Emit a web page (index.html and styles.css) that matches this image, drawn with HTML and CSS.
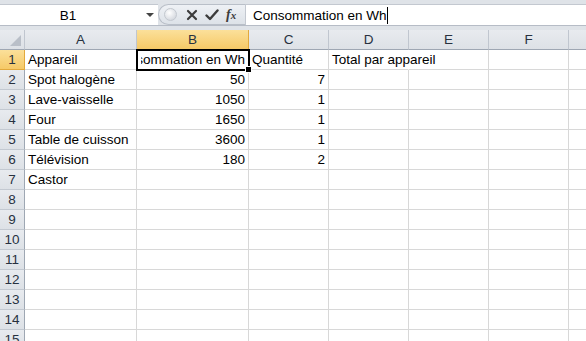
FILE: index.html
```html
<!DOCTYPE html>
<html>
<head>
<meta charset="utf-8">
<link rel="stylesheet" href="styles.css">
</head>
<body>
<div class="app">
  <div class="fbar">
    <div class="namebox">
      <span class="nb-text">B1</span>
      <span class="nb-arrow"></span>
    </div>
    <div class="tools">
      <span class="bubble"></span>
      <svg class="ic-x" width="12" height="12" viewBox="0 0 12 12"><path d="M2 2 L10 10 M10 2 L2 10" stroke="#3c3c3c" stroke-width="2.2" stroke-linecap="round"/></svg>
      <svg class="ic-ok" width="14" height="12" viewBox="0 0 14 12"><path d="M1.5 6.5 L5 10 L12.5 1.5" fill="none" stroke="#3c3c3c" stroke-width="2.4" stroke-linejoin="round" stroke-linecap="round"/></svg>
      <span class="fx">f<span class="fx-x">x</span></span>
    </div>
    <div class="finput"><span class="ftext">Consommation en Wh</span><span class="caret"></span></div>
  </div>
  <div class="gap"></div>
  <div class="sheet">
    <div class="hd corner"><span class="tri"></span></div>
    <div class="hd col">A</div>
    <div class="hd col sel">B</div>
    <div class="hd col">C</div>
    <div class="hd col">D</div>
    <div class="hd col">E</div>
    <div class="hd col">F</div>
    <div class="hd col last"></div>

    <div class="hd row sel">1</div>
    <div class="c">Appareil</div>
    <div class="c active"><span class="edit">Consommation en Wh</span><span class="handle"></span></div>
    <div class="c">Quantité</div>
    <div class="c over">Total par appareil</div>
    <div class="c"></div><div class="c"></div><div class="c"></div>

    <div class="hd row">2</div>
    <div class="c">Spot halogène</div><div class="c n">50</div><div class="c n">7</div>
    <div class="c"></div><div class="c"></div><div class="c"></div><div class="c"></div>

    <div class="hd row">3</div>
    <div class="c">Lave-vaisselle</div><div class="c n">1050</div><div class="c n">1</div>
    <div class="c"></div><div class="c"></div><div class="c"></div><div class="c"></div>

    <div class="hd row">4</div>
    <div class="c">Four</div><div class="c n">1650</div><div class="c n">1</div>
    <div class="c"></div><div class="c"></div><div class="c"></div><div class="c"></div>

    <div class="hd row">5</div>
    <div class="c">Table de cuisson</div><div class="c n">3600</div><div class="c n">1</div>
    <div class="c"></div><div class="c"></div><div class="c"></div><div class="c"></div>

    <div class="hd row">6</div>
    <div class="c">Télévision</div><div class="c n">180</div><div class="c n">2</div>
    <div class="c"></div><div class="c"></div><div class="c"></div><div class="c"></div>

    <div class="hd row">7</div>
    <div class="c">Castor</div><div class="c"></div><div class="c"></div>
    <div class="c"></div><div class="c"></div><div class="c"></div><div class="c"></div>

    <div class="hd row">8</div>
    <div class="c"></div><div class="c"></div><div class="c"></div><div class="c"></div><div class="c"></div><div class="c"></div><div class="c"></div>
    <div class="hd row">9</div>
    <div class="c"></div><div class="c"></div><div class="c"></div><div class="c"></div><div class="c"></div><div class="c"></div><div class="c"></div>
    <div class="hd row">10</div>
    <div class="c"></div><div class="c"></div><div class="c"></div><div class="c"></div><div class="c"></div><div class="c"></div><div class="c"></div>
    <div class="hd row">11</div>
    <div class="c"></div><div class="c"></div><div class="c"></div><div class="c"></div><div class="c"></div><div class="c"></div><div class="c"></div>
    <div class="hd row">12</div>
    <div class="c"></div><div class="c"></div><div class="c"></div><div class="c"></div><div class="c"></div><div class="c"></div><div class="c"></div>
    <div class="hd row">13</div>
    <div class="c"></div><div class="c"></div><div class="c"></div><div class="c"></div><div class="c"></div><div class="c"></div><div class="c"></div>
    <div class="hd row">14</div>
    <div class="c"></div><div class="c"></div><div class="c"></div><div class="c"></div><div class="c"></div><div class="c"></div><div class="c"></div>
    <div class="hd row">15</div>
    <div class="c"></div><div class="c"></div><div class="c"></div><div class="c"></div><div class="c"></div><div class="c"></div><div class="c"></div>
  </div>
</div>
</body>
</html>
```

FILE: styles.css
```css
html, body {
  margin: 0;
  padding: 0;
  width: 586px;
  height: 341px;
  overflow: hidden;
  background: #fff;
}
.app {
  font-family: "Liberation Sans", Arial, sans-serif;
  font-size: 13.5px;
  color: #000;
  width: 586px;
  height: 341px;
  overflow: hidden;
  background: #dfe3e8;
}
.fbar {
  display: flex;
  height: 26px;
  padding-top: 4px;
  box-sizing: border-box;
  border-bottom: 1px solid #b6bcc6;
}
.namebox {
  width: 158px;
  background: #fff;
  border-top: 1px solid #c3c8d0;
  display: flex;
  align-items: center;
  position: relative;
}
.nb-text {
  flex: 1;
  text-align: center;
  padding-right: 10px;
}
.nb-arrow {
  width: 0;
  height: 0;
  border-left: 4px solid transparent;
  border-right: 4px solid transparent;
  border-top: 4px solid #444;
  margin-right: 4px;
}
.tools {
  width: 87px;
  display: flex;
  align-items: center;
  background: linear-gradient(#eef1f5, #dde2e8);
  border: 1px solid #b9bfc8;
  border-right: none;
  border-radius: 11px 0 0 11px;
  box-sizing: border-box;
  padding-left: 5px;
}
.bubble {
  width: 11px;
  height: 11px;
  border-radius: 50%;
  background: radial-gradient(circle at 40% 35%, #fff, #c9ced6);
  border: 1px solid #c3c8cf;
  margin-right: 9px;
}
.ic-x { margin-right: 7px; }
.ic-ok { margin-right: 7px; }
.fx {
  font-family: "Liberation Serif", serif;
  font-style: italic;
  font-weight: bold;
  font-size: 14px;
  color: #3c3c3c;
}
.fx-x { font-size: 11px; }
.finput {
  flex: 1;
  background: #fff;
  border-top: 1px solid #c3c8d0;
  border-left: 1px solid #c3c8d0;
  display: flex;
  align-items: center;
  padding-left: 7px;
}
.caret {
  width: 1px;
  height: 17px;
  background: #000;
}
.gap {
  height: 4px;
}
.sheet {
  display: grid;
  grid-template-columns: 25px 112px 112px 80px 80px 80px 80px 80px;
  grid-auto-rows: 20px;
  background: #fff;
}
.hd {
  background: linear-gradient(#e8ebef, #dde1e6);
  color: #27313f;
  display: flex;
  align-items: center;
  justify-content: center;
  box-sizing: border-box;
  border-right: 1px solid #9ea7b3;
  border-bottom: 1px solid #9ea7b3;
}
.hd.col { border-right-color: #c0c6cf; }
.hd.row { border-right-color: #9ea7b3; border-bottom-color: #c3c9d1; }
.hd.sel {
  background: linear-gradient(#fbe09a, #f6c967);
  border-right-color: #e2a93d;
  border-bottom-color: #e2a93d;
}
.corner {
  position: relative;
  border-right-color: #c0c6cf;
}
.tri {
  position: absolute;
  right: 3px;
  bottom: 3px;
  width: 0;
  height: 0;
  border-left: 11px solid transparent;
  border-bottom: 11px solid #b9bfc8;
}
.c {
  box-sizing: border-box;
  border-right: 1px solid #d8d8d8;
  border-bottom: 1px solid #d8d8d8;
  padding: 0 3px;
  display: flex;
  align-items: center;
  white-space: nowrap;
  overflow: hidden;
}
.c.n { justify-content: flex-end; }
.c.over { overflow: visible; border-right-color: transparent; }
.active {
  position: relative;
  overflow: visible;
  justify-content: flex-end;
  outline: 2px solid #000;
  outline-offset: -1px;
  z-index: 1;
  background: #fff;
}
.edit {
  display: block;
  overflow: hidden;
  direction: rtl;
  max-width: 104px;
  text-align: right;
}
.handle {
  position: absolute;
  right: -4px;
  bottom: -4px;
  width: 5px;
  height: 5px;
  background: #000;
  border: 1px solid #fff;
}
```
